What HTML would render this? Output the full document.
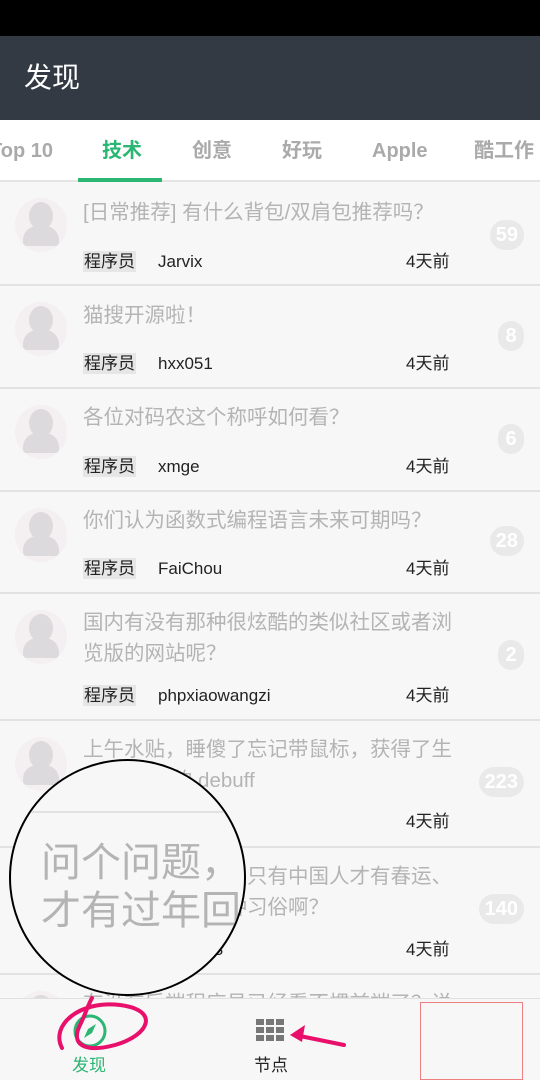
<!DOCTYPE html>
<html><head><meta charset="utf-8"><style>
*{margin:0;padding:0;box-sizing:border-box}
body{width:540px;height:1080px;overflow:hidden;background:#f7f7f7;font-family:"Liberation Sans","Noto Sans CJK SC",sans-serif;position:relative}
.sb{position:absolute;left:0;top:0;width:540px;height:36px;background:#000}
.hd{position:absolute;left:0;top:36px;width:540px;height:84px;background:#333a44;color:#fff;font-size:28px;line-height:84px;padding-left:24px}
.tabs{position:absolute;top:120px;left:0;width:540px;height:62px;background:#fff;border-bottom:2px solid #e4e4e4}
.tab{position:absolute;top:14px;height:34px;line-height:34px;font-size:20px;color:#aaa;white-space:nowrap;font-weight:bold}
.ul{position:absolute;left:78px;top:178px;width:84px;height:4px;background:#2bb673}
.item{position:absolute;left:0;width:540px;border-bottom:2px solid #e2e2e2}
.av{position:absolute;left:15px;width:52px;height:54px;border-radius:50%;background:#f4f0f2;overflow:hidden}
.av:before{content:"";position:absolute;left:14px;top:4px;width:24px;height:28px;border-radius:50%;background:#dcdadd}
.av:after{content:"";position:absolute;left:8px;top:28px;width:36px;height:20px;border-radius:14px 14px 4px 4px;background:#dcdadd}
.t{position:absolute;left:83px;width:382px;font-size:20.5px;line-height:31px;color:#b4b4b4}
.m{position:absolute;left:83px;font-size:17px;color:#222}
.m .n{background:#e6e6e6;padding:1px 1px}
.m .u{margin-left:22px}
.d{position:absolute;left:406px;font-size:17px;color:#222}
.b{position:absolute;right:16px;height:30px;border-radius:15px;background:#e9e9e9;color:#fff;font-weight:bold;font-size:20px;line-height:30px;text-align:center;padding:0 6px;min-width:26px}
.nav{position:absolute;left:0;top:998px;width:540px;height:82px;background:#f7f7f7;border-top:1px solid #e0e0e0}
</style></head><body>
<div class="sb"></div>
<div class="hd">发现</div>
<div class="tabs">
<div class="tab" style="left:-10px">Top 10</div>
<div class="tab" style="left:102px;color:#2bb673">技术</div>
<div class="tab" style="left:192px">创意</div>
<div class="tab" style="left:282px">好玩</div>
<div class="tab" style="left:372px">Apple</div>
<div class="tab" style="left:474px">酷工作</div>
</div>
<div class="ul"></div>

<div class="item" style="top:182px;height:104px"><div class="av" style="top:16px"></div><div class="t" style="top:15px">[日常推荐] 有什么背包/双肩包推荐吗？</div><div class="m" style="top:65px"><span class="n">程序员</span><span class="u">Jarvix</span></div><div class="d" style="top:65px">4天前</div><div class="b" style="top:38px">59</div></div>
<div class="item" style="top:286px;height:103px"><div class="av" style="top:16px"></div><div class="t" style="top:14px">猫搜开源啦！</div><div class="m" style="top:63px"><span class="n">程序员</span><span class="u">hxx051</span></div><div class="d" style="top:63px">4天前</div><div class="b" style="top:35px">8</div></div>
<div class="item" style="top:389px;height:103px"><div class="av" style="top:16px"></div><div class="t" style="top:13px">各位对码农这个称呼如何看？</div><div class="m" style="top:63px"><span class="n">程序员</span><span class="u">xmge</span></div><div class="d" style="top:63px">4天前</div><div class="b" style="top:35px">6</div></div>
<div class="item" style="top:492px;height:102px"><div class="av" style="top:16px"></div><div class="t" style="top:13px">你们认为函数式编程语言未来可期吗？</div><div class="m" style="top:62px"><span class="n">程序员</span><span class="u">FaiChou</span></div><div class="d" style="top:62px">4天前</div><div class="b" style="top:34px">28</div></div>
<div class="item" style="top:594px;height:127px"><div class="av" style="top:16px"></div><div class="t" style="top:13px">国内有没有那种很炫酷的类似社区或者浏<br>览版的网站呢？</div><div class="m" style="top:87px"><span class="n">程序员</span><span class="u">phpxiaowangzi</span></div><div class="d" style="top:87px">4天前</div><div class="b" style="top:46px">2</div></div>
<div class="item" style="top:721px;height:127px"><div class="av" style="top:16px"></div><div class="t" style="top:13px">上午水贴，睡傻了忘记带鼠标，获得了生<br>产力-80%的 debuff</div><div class="d" style="top:86px">4天前</div><div class="b" style="top:46px">223</div></div>
<div class="item" style="top:848px;height:127px"><div class="av" style="top:16px"></div><div class="t" style="top:13px">问个问题，是不是只有中国人才有春运、<br>才有过年回家这种习俗啊？</div><div class="m" style="top:87px"><span class="n">程序员</span><span class="u">ming888</span></div><div class="d" style="top:87px">4天前</div><div class="b" style="top:46px">140</div></div>
<div class="item" style="top:975px;height:60px"><div class="av" style="top:16px"></div><div class="t" style="top:13px">有没有后端程序员已经看不惯前端了？说</div></div>

<div style="position:absolute;left:9px;top:759px;width:237px;height:237px;border-radius:50%;border:2px solid #000;background:#f7f7f7;overflow:hidden">
<div style="position:absolute;left:0;top:50px;width:240px;height:2px;background:#e2e2e2"></div>
<div style="position:absolute;left:30px;top:78px;font-size:40px;line-height:48px;color:#b4b4b4;white-space:nowrap">问个问题，<br>才有过年回</div>
</div>

<div class="nav">
<svg style="position:absolute;left:72px;top:14px" width="36" height="36" viewBox="0 0 36 36"><circle cx="18" cy="18" r="15" fill="none" stroke="#2bb673" stroke-width="3"/><path d="M24 11 L20 20 L12 25 L16 16 Z" fill="#2bb673"/></svg>
<div style="position:absolute;left:72px;top:52px;font-size:17px;color:#2bb673">发现</div>
<svg style="position:absolute;left:256px;top:20px" width="30" height="24"><g fill="#777"><rect x="0" y="0" width="8" height="6"/><rect x="10" y="0" width="8" height="6"/><rect x="20" y="0" width="8" height="6"/><rect x="0" y="8" width="8" height="6"/><rect x="10" y="8" width="8" height="6"/><rect x="20" y="8" width="8" height="6"/><rect x="0" y="16" width="8" height="6"/><rect x="10" y="16" width="8" height="6"/><rect x="20" y="16" width="8" height="6"/></g></svg>
<div style="position:absolute;left:254px;top:52px;font-size:17px;color:#222">节点</div>
<div style="position:absolute;left:420px;top:3px;width:103px;height:78px;border:1px solid #f08080"></div>
</div>
<svg style="position:absolute;left:0;top:995px" width="540" height="85"><path d="M62 53 C50 30 80 5 120 10 C160 15 150 40 115 50 C85 58 70 50 80 30 C85 20 88 10 92 3" fill="none" stroke="#e8106a" stroke-width="4" stroke-linecap="round"/><path d="M344 50 L295 40" stroke="#e8106a" stroke-width="4" stroke-linecap="round"/><path d="M290 40 L305 30 L302 47 Z" fill="#e8106a"/></svg>
</body></html>
